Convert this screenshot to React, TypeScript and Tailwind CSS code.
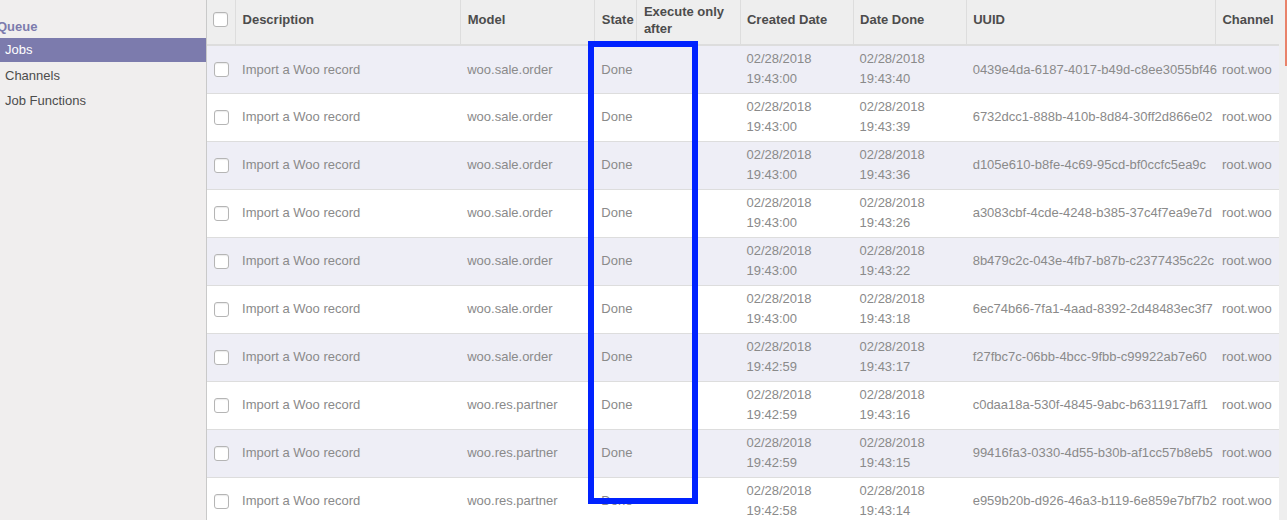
import React from "react";

const rows = [
  ["woo.sale.order", "19:43:00", "19:43:40", "0439e4da-6187-4017-b49d-c8ee3055bf46"],
  ["woo.sale.order", "19:43:00", "19:43:39", "6732dcc1-888b-410b-8d84-30ff2d866e02"],
  ["woo.sale.order", "19:43:00", "19:43:36", "d105e610-b8fe-4c69-95cd-bf0ccfc5ea9c"],
  ["woo.sale.order", "19:43:00", "19:43:26", "a3083cbf-4cde-4248-b385-37c4f7ea9e7d"],
  ["woo.sale.order", "19:43:00", "19:43:22", "8b479c2c-043e-4fb7-b87b-c2377435c22c"],
  ["woo.sale.order", "19:43:00", "19:43:18", "6ec74b66-7fa1-4aad-8392-2d48483ec3f7"],
  ["woo.sale.order", "19:42:59", "19:43:17", "f27fbc7c-06bb-4bcc-9fbb-c99922ab7e60"],
  ["woo.res.partner", "19:42:59", "19:43:16", "c0daa18a-530f-4845-9abc-b6311917aff1"],
  ["woo.res.partner", "19:42:59", "19:43:15", "99416fa3-0330-4d55-b30b-af1cc57b8eb5"],
  ["woo.res.partner", "19:42:58", "19:43:14", "e959b20b-d926-46a3-b119-6e859e7bf7b2"],
];

const cols = [
  { label: "", w: "w-[28px]" },
  { label: "Description", w: "w-[225px]" },
  { label: "Model", w: "w-[134px]" },
  { label: "State", w: "w-[42px]" },
  { label: "Execute only after", w: "w-[104px]" },
  { label: "Created Date", w: "w-[113px]" },
  { label: "Date Done", w: "w-[113px]" },
  { label: "UUID", w: "w-[249px]" },
  { label: "Channel", w: "w-[63px]" },
];

function Checkbox() {
  return (
    <span className="block w-[15px] h-[15px] rounded-[3px] border border-[#b5b5b5] bg-white shadow-[inset_0_1px_1px_rgba(0,0,0,0.08)]" />
  );
}

function Sidebar() {
  return (
    <div className="w-[207px] shrink-0 bg-[#f0eeee] border-r border-[#c9c9c9] pt-[17px] text-[13px]">
      <div className="-ml-[3px] h-[20px] leading-[20px] font-bold text-[#7c7bad]">Queue</div>
      <div className="mt-[1px] h-[24px] leading-[24px] pl-[5px] bg-[#7c7bad] text-white">Jobs</div>
      <div className="h-[25px] leading-[25px] pl-[5px] mt-[1px] text-[#4c4c4c]">Channels</div>
      <div className="h-[25px] leading-[25px] pl-[5px] text-[#4c4c4c]">Job Functions</div>
    </div>
  );
}

export default function App() {
  return (
    <div className="relative flex h-[520px] w-[1287px] overflow-hidden bg-white font-['Liberation_Sans',Arial,sans-serif] text-[13px]">
      <Sidebar />
      <div className="w-[1072px] shrink-0">
        <table className="table-fixed w-[1072px] border-collapse">
          <thead>
            <tr className="h-[45px] bg-[#eeeeee] border-b-2 border-[#dddddd]">
              {cols.map((c, i) => (
                <th
                  key={i}
                  className={`${c.w} ${i > 0 ? "border-l border-[#dddddd]" : ""} ${i > 0 && i < 5 ? "pl-[7px] pr-[5px]" : "px-[6px]"} pb-[5px] text-left align-middle font-bold text-[#4c4c4c] leading-[17px]`}
                >
                  {i === 0 ? <Checkbox /> : c.label}
                </th>
              ))}
            </tr>
          </thead>
          <tbody>
            {rows.map((r, i) => (
              <tr
                key={i}
                className={`h-[48px] border-b border-[#dddddd] ${i % 2 === 0 ? "bg-[#eeeef6]" : "bg-white"} text-[#8a8a8a]`}
              >
                <td className="pl-[7px] pr-[5px] align-middle">
                  <Checkbox />
                </td>
                <td className="pl-[7px] pr-[5px] align-middle">Import a Woo record</td>
                <td className="pl-[7px] pr-[5px] align-middle">{r[0]}</td>
                <td className="pl-[7px] pr-[5px] align-middle">Done</td>
                <td className="px-[6px] align-middle"></td>
                <td className="px-[6px] align-middle leading-[20px]">
                  02/28/2018
                  <br />
                  {r[1]}
                </td>
                <td className="px-[6px] align-middle leading-[20px]">
                  02/28/2018
                  <br />
                  {r[2]}
                </td>
                <td className="px-[6px] align-middle whitespace-nowrap">{r[3]}</td>
                <td className="px-[6px] align-middle whitespace-nowrap">root.woo</td>
              </tr>
            ))}
          </tbody>
        </table>
      </div>
      <div className="w-[8px] shrink-0 bg-[#eeeeee] flex justify-end">
        <div className="w-[2px] h-[66px] bg-[#e9836a]" />
      </div>
      <div className="absolute left-[588px] top-[41px] w-[110px] h-[463px] border-[6px] border-[#0022ff] pointer-events-none" />
    </div>
  );
}
